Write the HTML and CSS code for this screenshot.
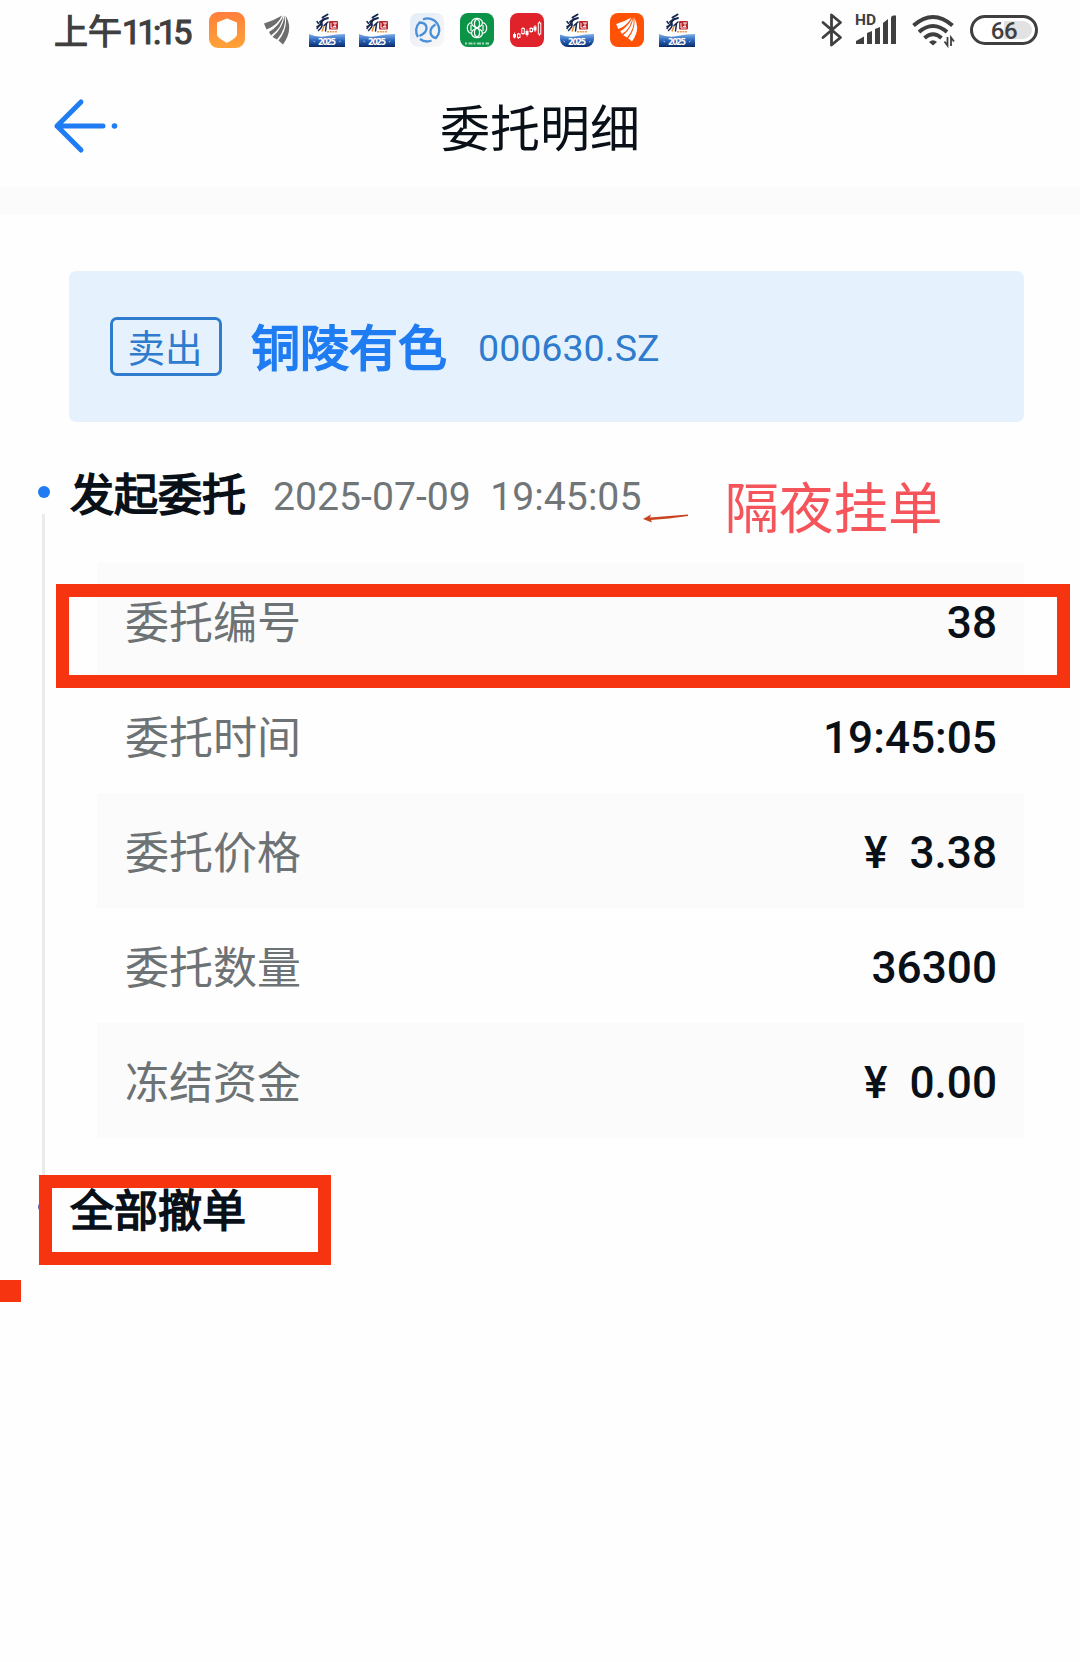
FILE: index.html
```html
<!DOCTYPE html>
<html lang="zh-CN">
<head>
    <meta charset="UTF-8">
    <meta name="viewport" content="width=device-width, initial-scale=1.0">
    <title>委托明细</title>
    <link rel="stylesheet" href="styles.css">
</head>
<body>

<svg class="defs" width="0" height="0">
    <defs>
        <linearGradient id="shieldBg" x1="0" y1="0" x2="0" y2="1">
            <stop offset="0" stop-color="#ff7f3c"/>
            <stop offset="1" stop-color="#ffa336"/>
        </linearGradient>
        <linearGradient id="waveBg" x1="0" y1="0" x2="0" y2="1">
            <stop offset="0" stop-color="#7fb0ea"/>
            <stop offset="0.5" stop-color="#2a63b8"/>
            <stop offset="1" stop-color="#0a2a66"/>
        </linearGradient>
        <linearGradient id="paleBg" x1="0" y1="0" x2="1" y2="1">
            <stop offset="0" stop-color="#e2ecf8"/>
            <stop offset="1" stop-color="#fbf7f5"/>
        </linearGradient>
        <clipPath id="roundClip"><rect x="1" y="0" width="34" height="34" rx="8"/></clipPath>
    </defs>
    <symbol id="brandArt" viewBox="0 0 36 34">
        <path d="M0 21q9 4 18 2t18-2v13H0z" fill="url(#waveBg)"/>
        <g fill="none" stroke="#15264f" stroke-linecap="round">
            <path d="M18.500 1.500l-5 3" stroke-width="2"/>
            <path d="M19 5q-5 1-8 4" stroke-width="1.800"/>
            <path d="M8 8.500l1.500 2M15 6l-7 9.500" stroke-width="1.500"/>
            <path d="M8 13.500q4-1 5-3 1 3-3.500 7" stroke-width="1.500"/>
            <path d="M19 9l-4 3.500M17.500 11l-1 7" stroke-width="1.500"/>
        </g>
        <path d="M15 13l-2 5.500" stroke="#e8862d" stroke-width="1.500"/>
        <rect x="20" y="8" width="9" height="8.500" rx="1" fill="#b9262c"/>
        <path d="M22 10v5h5.500M24 10h4M26 10v3M24 13.500h3" stroke="#fff" stroke-width="0.900" fill="none"/>
        <path d="M18 18.800h10" stroke="#e59a55" stroke-width="1.600" stroke-dasharray="2 0.700"/>
        <text class="brand-year" x="18" y="31.500" text-anchor="middle" textLength="18">2025</text>
        <path d="M4.500 28l1.500 1M31.500 28l-1.500 1" stroke="#9fc0ea" stroke-width="1"/>
    </symbol>
    <symbol id="stripes" viewBox="0 0 26 30">
        <path d="M0 8.500Q9 6 18 0.500 14 10 2.500 14.500z"/>
        <path d="M19.500 0.500Q18 13 7 20.500L5 17Q15 11 19.500 0.500z"/>
        <path d="M20.500 0.500Q23 13 13 24.500L8.500 22Q19 13 20.500 0.500z"/>
        <path d="M21.500 0.500Q30 14 19 29.500L14.500 25.500Q24 14 21.500 0.500z"/>
    </symbol>
</svg>

<div class="status-bar">
    <span class="clock">上午<span class="digits">11:15</span></span>
    <div class="app-icons">
        <span class="app">
            <svg width="36" height="36" viewBox="0 0 36 36">
                <rect width="36" height="36" rx="9" fill="url(#shieldBg)"/>
                <path d="M18 6.500l10 4v12q0 3-10 8.500-10-5.500-10-8.500v-12z" fill="#fff"/>
            </svg>
        </span>
        <span class="app">
            <svg width="26" height="30" fill="#6d6d6d"><use href="#stripes"/></svg>
        </span>
        <span class="app"><svg width="36" height="34"><use href="#brandArt"/></svg></span>
        <span class="app"><svg width="36" height="34"><use href="#brandArt"/></svg></span>
        <span class="app">
            <svg width="34" height="34" viewBox="0 0 34 34">
                <rect width="34" height="34" rx="8" fill="url(#paleBg)"/>
                <g fill="none" stroke="#4a90d9" stroke-width="2.300">
                    <path d="M13 6.500a11.500 11.500 0 0 1 13 18.500q-5-1-5.500-5.500t5-8"/>
                    <path d="M21.500 27.500a11.500 11.500 0 0 1-11.500-1.500M8 24a11.500 11.500 0 0 1 1.500-14.500q6.500 0 7 5t-7 8.500"/>
                </g>
            </svg>
        </span>
        <span class="app">
            <svg width="34" height="34" viewBox="0 0 34 34">
                <rect width="34" height="34" rx="8" fill="#0b9447"/>
                <g fill="none" stroke="#fff" stroke-width="1.200">
                    <path d="M11.500 9.500a5.700 5.700 0 0 1 11 0 5.700 5.700 0 0 1 0 11 5.700 5.700 0 0 1-11 0 5.700 5.700 0 0 1 0-11z"/>
                    <path d="M11.500 9.500q0 3.500 5.500 5.500t5.500 5.500M22.500 9.500q0 3.500-5.500 5.500t-5.500 5.500"/>
                    <ellipse cx="17" cy="10.500" rx="2.500" ry="4"/>
                    <ellipse cx="17" cy="19.500" rx="2.500" ry="4"/>
                    <path d="M11 12v6M23 12v6"/>
                </g>
                <path d="M5 30.500h24" stroke="#a5d9bb" stroke-width="1.800" stroke-dasharray="2 1.500 4 1"/>
            </svg>
        </span>
        <span class="app">
            <svg width="34" height="34" viewBox="0 0 34 34">
                <rect width="34" height="34" rx="8" fill="#e0222b"/>
                <path d="M4.500 19.500v6M8.500 20v6M13 14v8M17 16.500v7M21 14v6M25 12v7M29.500 8v15" stroke="#fff" stroke-width="0.800"/>
                <g fill="#e0222b" stroke="#fff" stroke-width="1">
                    <rect x="7.500" y="21" width="2.500" height="3.500"/>
                    <rect x="11.800" y="15.500" width="2.500" height="5"/>
                    <rect x="20" y="15.500" width="2.500" height="3"/>
                    <rect x="28.300" y="10" width="2.500" height="11"/>
                </g>
                <path d="M3 21h3v3.500h-3zM15.500 18h3v4h-3zM23.500 13.500h3v4h-3z" fill="#fff"/>
            </svg>
        </span>
        <span class="app"><svg width="36" height="34"><g clip-path="url(#roundClip)"><use href="#brandArt"/></g></svg></span>
        <span class="app">
            <svg width="34" height="34" viewBox="0 0 34 34">
                <rect width="34" height="34" rx="8" fill="#ff5206"/>
                <use href="#stripes" x="6" y="4" width="22" height="25" fill="#fff"/>
            </svg>
        </span>
        <span class="app"><svg width="36" height="34"><use href="#brandArt"/></svg></span>
    </div>
    <div class="system-icons">
        <svg class="bluetooth" width="22" height="34" viewBox="0 0 22 34" fill="none" stroke="#3f3f3f" stroke-width="2.800" stroke-linejoin="round" stroke-linecap="round">
            <path d="M2 9.500l17.500 15-9 7.500V2l9 7.500L2 24.500"/>
        </svg>
        <svg width="42" height="34" viewBox="0 0 42 34" fill="#3f3f3f">
            <text class="hd" x="0" y="12">HD</text>
            <path d="M1 31v-3l8-4.500V31zM12 31V20l5-2v13zM20 31V16l5-2v17zM28 31V10l5-4v25zM36 31V5q0-2 2-2.500h3V31z"/>
        </svg>
        <svg width="43" height="34" viewBox="0 0 43 34" fill="none" stroke="#3f3f3f" stroke-width="4">
            <path d="M1.500 12.500q19.500-17 39 0"/>
            <path d="M7 19q14-12 28 0"/>
            <path d="M12.500 25q8.500-7.500 17 0"/>
            <path d="M17 29q4-3.500 8 0l-4 3.500z" fill="#3f3f3f" stroke="none"/>
            <path d="M35.500 24v8.500l-3-4M39 33v-8.500l3 4" stroke-width="1.800"/>
        </svg>
        <span class="battery">66</span>
    </div>
</div>

<div class="header">
    <svg class="back" width="66" height="54" viewBox="0 0 66 54" fill="none" stroke="#1f7cf2" stroke-width="5" stroke-linecap="round" stroke-linejoin="round">
        <path d="M27 3L3 27l24 24M3 27h46"/>
        <circle cx="60.500" cy="27" r="2.800" fill="#1f7cf2" stroke="none"/>
    </svg>
    <h1>委托明细</h1>
</div>
<div class="divider"></div>

<div class="stock-card">
    <span class="side-tag">卖出</span>
    <span class="stock-name">铜陵有色</span>
    <span class="stock-code">000630.SZ</span>
</div>

<div class="timeline">
    <div class="step">
        <div class="rail">
            <span class="dot"></span>
            <span class="line"></span>
        </div>
        <div class="step-body">
            <div class="step-head">
                <h2>发起委托</h2>
                <span class="step-time">2025-07-09&nbsp; 19:45:05</span>
                <svg class="arrow" width="46" height="10" viewBox="0 0 46 10" fill="#c9431f">
                    <path d="M0 6l8-4.500-1 3 38-3v1.500l-19 2.500-18 1.500 1 2.500z"/>
                </svg>
                <span class="note">隔夜挂单</span>
            </div>
            <div class="details">
                <div class="row"><span class="label">委托编号</span><span class="value">38</span></div>
                <div class="row"><span class="label">委托时间</span><span class="value">19:45:05</span></div>
                <div class="row"><span class="label">委托价格</span><span class="value">¥&nbsp; 3.38</span></div>
                <div class="row"><span class="label">委托数量</span><span class="value">36300</span></div>
                <div class="row"><span class="label">冻结资金</span><span class="value">¥&nbsp; 0.00</span></div>
                <div class="mark mark-number"></div>
            </div>
        </div>
    </div>
    <div class="step step-last">
        <div class="rail">
            <span class="dot"></span>
        </div>
        <h2>全部撤单</h2>
        <div class="mark mark-cancel"></div>
        <div class="mark-square"></div>
    </div>
</div>

</body>
</html>
```
FILE: styles.css
```css
* {
    box-sizing: border-box;
}
body {
    margin: 0;
    min-height: 1662px;
    background: #fefefe;
    font-family: Roboto, "Noto Sans CJK SC", sans-serif;
    color: #0a1017;
}
h1, h2 {
    margin: 0;
}
svg {
    display: block;
    flex: none;
    overflow: visible;
}
.defs {
    position: absolute;
}

/* status bar */
.status-bar {
    display: flex;
    align-items: center;
    height: 60px;
    padding: 0 42px 0 54px;
    color: #3f3f3f;
}
.clock {
    width: 148px;
    padding-top: 4px;
    font-size: 34px;
    font-weight: 400;
    line-height: 56px;
    white-space: nowrap;
    -webkit-text-stroke: 1.2px #3f3f3f;
}
.digits {
    letter-spacing: -3.6px;
}
.app-icons {
    display: flex;
}
.app {
    display: flex;
    align-items: center;
    justify-content: center;
    width: 50px;
}
.brand-year {
    font: bold 8px "DejaVu Sans", sans-serif;
    fill: #fff;
}
.system-icons {
    display: flex;
    align-items: center;
    gap: 15px;
    margin-left: auto;
}
.bluetooth {
    margin-right: -3px;
}
.hd {
    font: 700 15.5px Roboto, sans-serif;
}
.battery {
    width: 68px;
    height: 30px;
    border: 3px solid #3f3f3f;
    border-radius: 15px;
    background: linear-gradient(to right, #fff 50%, #e2e2e2 50%);
    box-shadow: inset 0 0 0 3px #fff;
    font-size: 24px;
    font-weight: 500;
    line-height: 26px;
    letter-spacing: -0.5px;
    text-align: center;
}

/* header */
.header {
    display: grid;
    grid-template-columns: 66px 1fr 66px;
    align-items: center;
    height: 127px;
    padding: 4px 54px 0;
}
.header h1 {
    padding-top: 9px;
    font-size: 50px;
    font-weight: 400;
    line-height: 60px;
    text-align: center;
}
.divider {
    height: 28px;
    background: #fbfbfb;
}

/* stock card */
.stock-card {
    display: flex;
    align-items: center;
    height: 151px;
    margin: 56px 56px 0 69px;
    padding: 0 41px;
    border-radius: 7px;
    background: #e5f2fe;
    color: #2f7bcd;
}
.side-tag {
    width: 112px;
    height: 59px;
    padding: 3px 2px 0 0;
    border: 3px solid #2f7bcd;
    border-radius: 7px;
    font-size: 37.5px;
    line-height: 53px;
    text-align: center;
}
.stock-name {
    margin-left: 29px;
    padding-top: 6px;
    color: #1f7cf2;
    font-size: 49px;
    font-weight: 400;
    line-height: 60px;
    -webkit-text-stroke: 1.8px #1f7cf2;
}
.stock-code {
    margin-left: 31px;
    padding-top: 3px;
    font-size: 37.6px;
    line-height: 60px;
}

/* timeline */
.timeline {
    padding-top: 40px;
}
.step {
    position: relative;
    display: flex;
}
.rail {
    display: flex;
    flex-direction: column;
    align-items: center;
    width: 31px;
    margin-left: 28px;
    padding-top: 24px;
}
.dot {
    width: 12px;
    height: 12px;
    border-radius: 50%;
    background: #1f7cf2;
}
.line {
    flex: 1;
    width: 3px;
    margin-top: 16px;
    background: #e9ebec;
}
.step-body {
    flex: 1;
    padding: 0 56px 38px 11px;
}
.step h2 {
    padding-top: 4px;
    font-size: 44px;
    font-weight: 400;
    line-height: 60px;
    -webkit-text-stroke: 1.6px #0a1017;
}
.step-head {
    display: flex;
    align-items: flex-start;
    height: 101px;
}
.step-time {
    margin: 5px 0 0 27px;
    color: #707578;
    font-size: 39.2px;
    line-height: 60px;
    white-space: nowrap;
}
.arrow {
    margin: 51px 0 0 2px;
}
.note {
    margin: 17px 0 0 35px;
    color: #f5545b;
    font-size: 54.5px;
    line-height: 60px;
    white-space: nowrap;
}
.details {
    position: relative;
    margin-left: 27px;
}
.row {
    display: flex;
    align-items: center;
    justify-content: space-between;
    height: 115px;
    padding: 4px 27px 0 28px;
}
.row:nth-child(odd) {
    background: #fbfbfb;
}
.label {
    padding-top: 3px;
    color: #6d7274;
    font-size: 44px;
    line-height: 60px;
}
.value {
    font-size: 44.2px;
    font-weight: 500;
    line-height: 60px;
}
.step-last h2 {
    margin-left: 11px;
    padding-top: 6px;
}
.step-last .dot {
    margin-top: 1px;
    background: #5a5fc0;
}

/* red marker boxes drawn over the page */
.mark {
    position: absolute;
    border: 13px solid #f63510;
}
.mark-number {
    top: 21px;
    left: -41px;
    width: 1014px;
    height: 104px;
}
.mark-cancel {
    top: -1px;
    left: 39px;
    width: 292px;
    height: 90px;
}
.mark-square {
    position: absolute;
    top: 104px;
    left: 0;
    width: 21px;
    height: 22px;
    background: #f63510;
}
```
